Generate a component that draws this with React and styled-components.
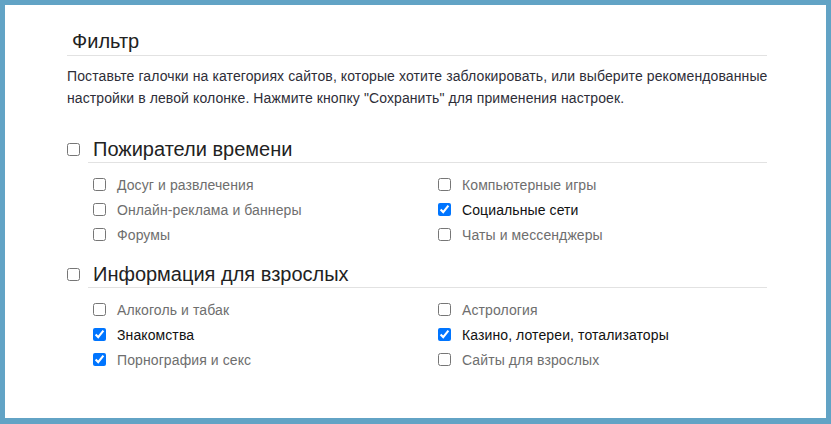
import React from "react";
import styled, { createGlobalStyle } from "styled-components";

const groups = [
  {
    title: "Пожиратели времени",
    items: [
      ["Досуг и развлечения", false, false],
      ["Компьютерные игры", false, false],
      ["Онлайн-реклама и баннеры", false, false],
      ["Социальные сети", true, true],
      ["Форумы", false, false],
      ["Чаты и мессенджеры", false, false],
    ],
  },
  {
    title: "Информация для взрослых",
    items: [
      ["Алкоголь и табак", false, false],
      ["Астрология", false, false],
      ["Знакомства", true, true],
      ["Казино, лотереи, тотализаторы", true, true],
      ["Порнография и секс", true, false],
      ["Сайты для взрослых", false, false],
    ],
  },
];

function App() {
  return (
    <Page>
      <GlobalStyle />
      <Panel>
        <Content>
          <Title>Фильтр</Title>
          <Description>
            Поставьте галочки на категориях сайтов, которые хотите заблокировать,
            или выберите рекомендованные
            <br />
            настройки в левой колонке. Нажмите кнопку "Сохранить" для применения
            настроек.
          </Description>
          {groups.map((g) => (
            <Group key={g.title}>
              <GroupHeader>
                <Check type="checkbox" defaultChecked={false} />
                <GroupTitle>{g.title}</GroupTitle>
              </GroupHeader>
              <Items>
                {g.items.map(([label, checked, dark]) => (
                  <Item key={label}>
                    <Check type="checkbox" defaultChecked={checked} />
                    <ItemLabel $dark={dark}>{label}</ItemLabel>
                  </Item>
                ))}
              </Items>
            </Group>
          ))}
        </Content>
      </Panel>
    </Page>
  );
}

//============================== Styles ======================================//

const GlobalStyle = createGlobalStyle`
  body {
    margin: 0;
    font-family: "Liberation Sans", Arial, sans-serif;
  }
`;

const Page = styled.div`
  width: 831px;
  height: 424px;
  box-sizing: border-box;
  padding: 5px 5px 6px 5px;
  background: #62a3c5;
`;

const Panel = styled.div`
  height: 100%;
  background: #ffffff;
  padding: 23px 0 0 62px;
  box-sizing: border-box;
`;

const Content = styled.div`
  width: 700px;
`;

const Title = styled.h2`
  margin: 0;
  padding-left: 5px;
  font-size: 20px;
  line-height: 27px;
  font-weight: normal;
  color: #222;
  border-bottom: 1px solid #e2e2e2;
`;

const Description = styled.p`
  margin: 9px 0 0 0;
  font-size: 14px;
  letter-spacing: 0.1px;
  line-height: 22px;
  color: #2e2e38;
  white-space: nowrap;
`;

const Group = styled.div`
  margin-top: 27px;
  & + & {
    margin-top: 14px;
  }
`;

const GroupHeader = styled.div`
  display: flex;
  align-items: center;
`;

const GroupTitle = styled.div`
  flex: 1;
  margin-left: 8px;
  padding-left: 5px;
  font-size: 20px;
  line-height: 26px;
  color: #222;
  border-bottom: 1px solid #e2e2e2;
`;

const Items = styled.div`
  display: grid;
  grid-template-columns: 345px 1fr;
  margin: 9px 0 0 26px;
`;

const Item = styled.label`
  display: flex;
  align-items: center;
  height: 25px;
`;

const Check = styled.input`
  width: 13px;
  height: 13px;
  margin: 0;
  accent-color: #0075ff;
`;

const ItemLabel = styled.span`
  margin-left: 11px;
  font-size: 14px;
  letter-spacing: 0.1px;
  color: ${(p) => (p.$dark ? "#111" : "#6e6e6e")};
`;

export default App;
